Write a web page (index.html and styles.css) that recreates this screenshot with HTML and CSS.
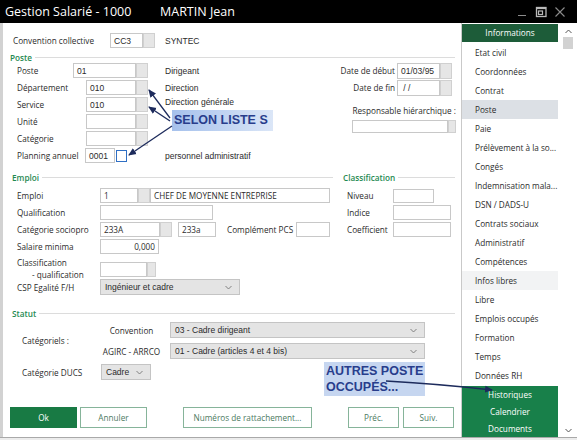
FILE: index.html
```html
<!DOCTYPE html>
<html lang="fr">
<head>
<meta charset="utf-8">
<title>Gestion Salarié</title>
<link rel="stylesheet" href="styles.css">
</head>
<body>
<div class="titlebar">
  <span class="t1">Gestion Salarié - 1000</span>
  <span class="t2">MARTIN Jean</span>
  <div class="wctl">
    <svg class="ic" width="12" height="12" viewBox="0 0 12 12"><line x1="2" y1="9.5" x2="10" y2="9.5" stroke="#8c8c8c" stroke-width="1"/></svg>
    <svg class="ic" width="12" height="12" viewBox="0 0 12 12"><rect x="1.5" y="1.5" width="9.5" height="9" fill="none" stroke="#b9b9b9" stroke-width="1.3"/><line x1="1.5" y1="2.3" x2="11" y2="2.3" stroke="#b9b9b9" stroke-width="1.6"/><rect x="3.5" y="5" width="4" height="3.5" fill="none" stroke="#b9b9b9" stroke-width="1.2"/></svg>
    <svg class="ic" width="12" height="12" viewBox="0 0 12 12"><path d="M1.5 1.5 L10.5 10.5 M10.5 1.5 L1.5 10.5" stroke="#8c8c8c" stroke-width="1.1"/></svg>
  </div>
</div>
<div class="win">
  <div class="main">
    <div class="conv">
      <span class="lbl cw">Convention collective</span>
      <span class="inp w33">CC3</span><span class="btn"></span>
      <span class="val ml10">SYNTEC</span>
    </div>

    <div class="legend lg-poste"><span>Poste</span><i></i></div>
    <div class="poste">
      <div class="pl">
        <div class="prow"><div class="lc"><span class="lbl">Poste</span><span class="inp w63 ra-grp">01</span><span class="btn"></span></div><span class="val">Dirigeant</span></div>
        <div class="prow"><div class="lc"><span class="lbl">Département</span><span class="inp w50 ra-grp">010</span><span class="btn"></span></div><span class="val">Direction</span></div>
        <div class="prow"><div class="lc"><span class="lbl">Service</span><span class="inp w50 ra-grp">010</span><span class="btn"></span></div><span class="val up">Direction générale</span></div>
        <div class="prow"><div class="lc"><span class="lbl">Unité</span><span class="inp w50 ra-grp"></span><span class="btn"></span></div></div>
        <div class="prow"><div class="lc"><span class="lbl">Catégorie</span><span class="inp w50 ra-grp"></span><span class="btn"></span></div></div>
        <div class="prow"><div class="lc"><span class="lbl">Planning annuel</span><span class="inp w30 ra-grp">0001</span><span class="bbtn"></span></div><span class="val">personnel administratif</span></div>
      </div>
      <div class="pr">
        <div class="drow"><span class="lbl">Date de début</span><span class="inp dinp">01/03/95</span><span class="btn dbtn"></span></div>
        <div class="drow"><span class="lbl">Date de fin</span><span class="inp dinp">&nbsp;/ /</span><span class="btn dbtn"></span></div>
        <div class="resp">Responsable hiérarchique :</div>
        <div class="rinp"><span class="inp rin"></span><span class="btn rbtn"></span></div>
      </div>
    </div>

    <div class="emp">
      <div class="el">
        <div class="legend lg-emp"><span>Emploi</span><i></i></div>
        <div class="erows">
          <div class="erow"><span class="lbl ew">Emploi</span><span class="inp so w38">1</span><span class="btn"></span><span class="inp so w180">CHEF DE MOYENNE ENTREPRISE</span></div>
          <div class="erow"><span class="lbl ew">Qualification</span><span class="inp so w113"></span></div>
          <div class="erow"><span class="lbl ew">Catégorie sociopro</span><span class="inp so w60">233A</span><span class="btn"></span><span class="inp so w38 ml6">233a</span><span class="lbl cpcs">Complément PCS</span><span class="inp w34"></span></div>
          <div class="erow"><span class="lbl ew">Salaire minima</span><span class="inp so w59 rt">0,000</span></div>
          <div class="cblock"><span class="lbl ew clab">Classification<br><span class="ind">- qualification</span></span><span class="inp w47 cin"></span><span class="btn cbt"></span></div>
          <div class="erow csp"><span class="lbl ew">CSP Egalité F/H</span><span class="sel w140">Ingénieur et cadre<svg class="chev" width="7" height="5" viewBox="0 0 7 5"><path d="M0.5 1 L3.5 4 L6.5 1" fill="none" stroke="#777" stroke-width="0.9"/></svg></span></div>
        </div>
      </div>
      <div class="er">
        <div class="legend lg-cls"><span>Classification</span><i></i></div>
        <div class="crows">
          <div class="crow"><span class="lbl clw">Niveau</span><span class="inp w41 h14"></span></div>
          <div class="crow"><span class="lbl clw">Indice</span><span class="inp w58"></span></div>
          <div class="crow"><span class="lbl clw">Coefficient</span><span class="inp w58"></span></div>
        </div>
      </div>
    </div>

    <div class="legend lg-stat"><span>Statut</span><i></i></div>
    <div class="sgrid">
      <span class="lbl catg">Catégoriels :</span>
      <span class="lbl mid">Convention</span>
      <span class="sel">03 - Cadre dirigeant<svg class="chev" width="7" height="5" viewBox="0 0 7 5"><path d="M0.5 1 L3.5 4 L6.5 1" fill="none" stroke="#777" stroke-width="0.9"/></svg></span>
      <span class="lbl mid">AGIRC - ARRCO</span>
      <span class="sel">01 - Cadre (articles 4 et 4 bis)<svg class="chev" width="7" height="5" viewBox="0 0 7 5"><path d="M0.5 1 L3.5 4 L6.5 1" fill="none" stroke="#777" stroke-width="0.9"/></svg></span>
      <span class="lbl">Catégorie DUCS</span>
      <span class="sel w50 ducs">Cadre<svg class="chev" width="7" height="5" viewBox="0 0 7 5"><path d="M0.5 1 L3.5 4 L6.5 1" fill="none" stroke="#777" stroke-width="0.9"/></svg></span>
    </div>

    <div class="btns">
      <span class="b ok">Ok</span>
      <span class="b annul">Annuler</span>
      <span class="b num">Numéros de rattachement...</span>
      <span class="b prec">Préc.</span>
      <span class="b suiv">Suiv.</span>
    </div>
  </div>

  <div class="side">
    <div class="sh">Informations</div>
    <div class="items">
      <div class="it">Etat civil</div>
      <div class="it">Coordonnées</div>
      <div class="it">Contrat</div>
      <div class="it cur">Poste</div>
      <div class="it">Paie</div>
      <div class="it">Prélèvement à la so...</div>
      <div class="it">Congés</div>
      <div class="it">Indemnisation mala...</div>
      <div class="it">DSN / DADS-U</div>
      <div class="it">Contrats sociaux</div>
      <div class="it">Administratif</div>
      <div class="it">Compétences</div>
      <div class="it soft">Infos libres</div>
      <div class="it">Libre</div>
      <div class="it">Emplois occupés</div>
      <div class="it">Formation</div>
      <div class="it">Temps</div>
      <div class="it">Données RH</div>
    </div>
    <div class="gb">
      <div>Historiques</div>
      <div>Calendrier</div>
      <div>Documents</div>
    </div>
  </div>

  <div class="scr">
    <svg class="sup" width="7" height="5" viewBox="0 0 7 5"><path d="M0.5 4 L3.5 1 L6.5 4" fill="none" stroke="#555" stroke-width="1"/></svg>
    <div class="thumb"></div>
    <svg class="sdn" width="7" height="5" viewBox="0 0 7 5"><path d="M0.5 1 L3.5 4 L6.5 1" fill="none" stroke="#555" stroke-width="1"/></svg>
  </div>
</div>

<div class="note note1">SELON LISTE S</div>
<div class="note note2">AUTRES POSTE<br>OCCUPÉS...</div>

<svg class="arrows" width="577" height="440" viewBox="0 0 577 440">
  <defs>
    <marker id="ah" markerWidth="8" markerHeight="8" refX="7" refY="4" orient="auto" markerUnits="userSpaceOnUse">
      <path d="M0 0.5 L8 4 L0 7.5 Z" fill="#1d2b5c"/>
    </marker>
  </defs>
  <g stroke="#1d2b5c" stroke-width="1.3" fill="none">
    <line x1="170" y1="118" x2="149" y2="90" marker-end="url(#ah)"/>
    <line x1="170" y1="121" x2="149" y2="107" marker-end="url(#ah)"/>
    <line x1="172" y1="126" x2="129" y2="155" marker-end="url(#ah)"/>
    <path d="M386 381 Q440 384 492 390" marker-end="url(#ah)"/>
  </g>
</svg>
</body>
</html>
```

FILE: styles.css
```css
* { box-sizing: border-box; margin: 0; padding: 0; }
html, body { width: 577px; height: 440px; overflow: hidden; }
body {
  background: #ececec;
  font-family: "Open Sans", "Noto Sans", sans-serif;
  font-size: 8.2px;
  color: #2b2b2b;
  position: relative;
}

/* title bar */
.titlebar {
  height: 23px;
  background: #000;
  color: #fff;
  display: flex;
  align-items: center;
  padding-left: 5px;
  font-size: 12.5px;
}
.t1 { width: 155px; white-space: nowrap; }
.t2 { white-space: nowrap; }
.wctl { margin-left: auto; display: flex; align-items: center; gap: 7px; padding-right: 11px; }
.ic { display: block; }

/* window */
.win {
  display: flex;
  height: 415px;
  background: #fff;
  border-bottom: 1px solid #a9a9a9;
}
.main { width: 461px; border-left: 3px solid #d2d2d2; }

.lbl { white-space: nowrap; }
.inp {
  height: 15px;
  border: 1px solid #c8c8c8;
  background: #fff;
  display: flex;
  align-items: center;
  padding-left: 3px;
  font-family: "Liberation Sans", Arial, sans-serif;
  font-size: 8.5px;
  white-space: nowrap;
  overflow: hidden;
  flex: none;
}
.inp.so { font-family: "Open Sans", sans-serif; font-size: 8.2px; }
.btn {
  width: 12px;
  height: 15px;
  background: #e6e6e6;
  border: 1px solid #d0d0d0;
  flex: none;
}
.val { margin-left: 17px; font-family: "Liberation Sans", Arial, sans-serif; font-size: 8.5px; white-space: nowrap; }
.val.up { margin-bottom: 6px; }
.ml10 { margin-left: 10px; }
.ml6 { margin-left: 6px; }
.w30 { width: 30px; } .w33 { width: 33px; } .w34 { width: 34px; } .w38 { width: 38px; }
.w41 { width: 41px; } .w47 { width: 47px; } .w50 { width: 50px; } .w58 { width: 58px; }
.w59 { width: 59px; } .w60 { width: 60px; } .w63 { width: 63px; } .w113 { width: 113px; }
.w140 { width: 140px; } .w180 { width: 180px; }
.h14 { height: 14px; }
.rt { justify-content: flex-end; padding-right: 3px; }

/* convention */
.conv { display: flex; align-items: center; height: 15px; margin-top: 10px; padding-left: 10px; }
.cw { width: 97px; }

/* legends */
.legend {
  display: flex;
  align-items: center;
  height: 10px;
  color: #1f8a52;
  font-weight: 600;
}
.legend span { white-space: nowrap; }
.legend i { flex: 1; border-top: 1px solid #dcdcdc; margin-left: 3px; }
.lg-poste { margin-top: 4px; padding-left: 7px; margin-right: 6px; }
.lg-emp { padding-left: 9px; margin-right: 5px; }
.lg-cls { padding-left: 5px; margin-right: 6px; }
.lg-stat { margin-top: 13px; padding-left: 9px; margin-right: 6px; }

/* poste */
.poste { display: flex; }
.pl { padding-left: 14px; }
.prow { display: flex; align-items: center; height: 17px; }
.lc { width: 131px; display: flex; align-items: center; }
.lc .ra-grp { margin-left: auto; }
.bbtn {
  width: 11px;
  height: 12px;
  margin-left: 1px;
  margin-right: 21px;
  border: 1.5px solid #2f6fc4;
  background: #fff;
  flex: none;
}
.pr {
  margin-left: auto;
  width: 160px;
  padding-right: 5px;
  display: flex;
  flex-direction: column;
  align-items: flex-end;
}
.drow { height: 17px; display: flex; align-items: center; padding-right: 4px; }
.drow .lbl { margin-right: 2px; }
.dinp { width: 43px; height: 16px; }
.dbtn { height: 16px; }
.resp { margin-top: 7px; height: 16px; line-height: 16px; white-space: nowrap; }
.rinp { margin-top: 1px; display: flex; }
.rin { width: 96px; height: 13px; }
.rbtn { width: 8px; height: 13px; }

/* emploi */
.emp { display: flex; align-items: flex-start; margin-top: 8px; }
.el { width: 335px; }
.er { flex: 1; }
.erows { padding-left: 14px; margin-top: 5px; }
.erow { display: flex; align-items: center; height: 17px; }
.ew { width: 83px; flex: none; }
.cpcs { margin-left: 11px; width: 69px; }
.cblock { display: flex; height: 24px; }
.clab { padding-top: 2px; line-height: 11.5px; }
.ind { padding-left: 15px; }
.cin { margin-top: 7px; }
.cbt { margin-top: 7px; width: 9px; }
.erow.csp { height: 16px; }
.crows { margin-top: 5px; }
.crow { display: flex; align-items: center; height: 17px; padding-left: 9px; }
.clw { width: 46px; }

/* selects */
.sel {
  height: 16px;
  background: #e4e4e4;
  border: 1px solid #c4c4c4;
  display: flex;
  align-items: center;
  padding-left: 4px;
  font-family: "Liberation Sans", Arial, sans-serif;
  font-size: 8.5px;
  white-space: nowrap;
}
.chev { margin-left: auto; margin-right: 7px; flex: none; }

/* statut */
.sgrid {
  display: grid;
  grid-template-columns: 79px 69px 255px;
  grid-auto-rows: 16px;
  row-gap: 5px;
  margin-top: 4px;
  padding-left: 19px;
  align-items: center;
}
.catg { grid-row: span 2; }
.mid { text-align: center; padding-right: 8px; }
.ducs { width: 50px; }

/* buttons */
.btns { display: flex; margin-top: 27px; }
.b {
  height: 21px;
  border: 1px solid #86b49a;
  color: #4c7a5f;
  background: #fff;
  display: flex;
  align-items: center;
  justify-content: center;
  white-space: nowrap;
}
.ok { margin-left: 7px; width: 67px; background: #187a44; border-color: #187a44; color: #fff; }
.annul { margin-left: 3px; width: 67px; }
.num { margin-left: 36px; width: 129px; }
.prec { margin-left: 36px; width: 51px; }
.suiv { margin-left: 4px; width: 51px; }

/* sidebar */
.side { width: 97px; border-left: 1px solid #c9c9c9; display: flex; flex-direction: column; }
.sh { margin-top: 1px; height: 18px; line-height: 18px; background: #1d5c39; color: #fff; text-align: center; }
.items { margin-top: 1px; }
.it { height: 19px; line-height: 19px; padding-left: 13px; white-space: nowrap; color: #2b2b2b; }
.it.cur { background: #dce0e5; }
.it.soft { background: #f2f3f4; }
.gb { margin-top: 1px; flex: 1; background: #18804a; color: #fff; }
.gb div { height: 17px; line-height: 17px; text-align: center; }

/* scrollbar */
.scr { width: 19px; display: flex; flex-direction: column; align-items: center; padding-left: 1px; }
.sup { margin-top: 6px; }
.thumb { margin-top: 3px; width: 10px; height: 12px; background: #d2d2d2; }
.sdn { margin-top: auto; margin-bottom: 4px; }

/* annotations */
.note {
  position: absolute;
  font-family: "Liberation Sans", Arial, sans-serif;
  font-weight: bold;
  font-size: 12.5px;
  color: #283d8c;
  white-space: nowrap;
}
.note1 {
  left: 172px; top: 110px; width: 101px; height: 21px;
  line-height: 21px; padding-left: 2px;
  background: linear-gradient(90deg, #a6c1ec 0%, #c2d5f2 55%, #dbe6f7 100%);
}
.note2 {
  left: 324px; top: 362px; width: 101px; height: 34px;
  line-height: 16px; padding: 1px 0 0 2px;
  background: #c6d6f0;
}
.arrows { position: absolute; left: 0; top: 0; pointer-events: none; }
```
